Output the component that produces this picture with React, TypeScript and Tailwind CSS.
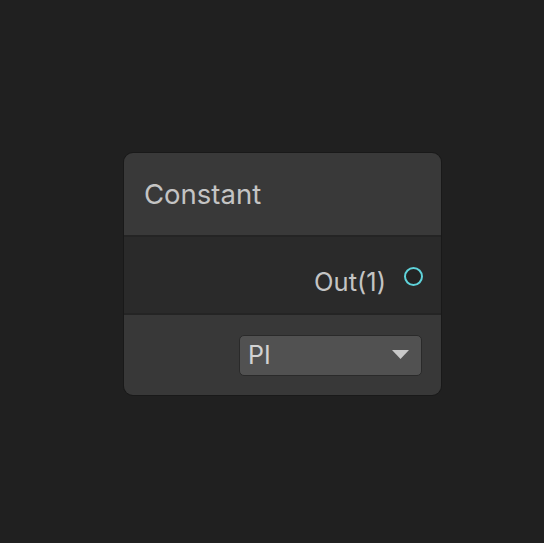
export default function App() {
  return (
    <div
      className="w-[544px] h-[543px] bg-[#202020] pt-[152px] pl-[123px]"
      style={{ fontFamily: "Inter, 'Noto Sans', sans-serif" }}
    >
      <div className="w-[319px] rounded-[10px] border border-[#191919] overflow-hidden">
        <div className="h-[84px] bg-[#393939] flex items-center pl-[20px] border-b-2 border-[#242424]">
          <span className="text-[27.5px] text-[#c4c4c4] leading-none mt-[2px]">Constant</span>
        </div>
        <div className="h-[78px] bg-[#2a2a2a] flex items-center justify-end pr-[18px] border-b-2 border-[#242424]">
          <span className="text-[25.5px] text-[#c4c4c4] leading-none mt-[14px]">Out(1)</span>
          <div className="ml-[18px] w-[19px] h-[19px] rounded-full border-2 border-[#5fd3da] bg-[#232323] mt-[2px]" />
        </div>
        <div className="h-[80px] bg-[#383838] flex items-center justify-end pr-[19px]">
          <div className="w-[183px] h-[41px] rounded-[5px] bg-[#515151] border border-[#2a2a2a] flex items-center pl-[8px] pr-[12px] justify-between">
            <span className="text-[25px] text-[#d2d2d2] leading-none">PI</span>
            <svg width="17" height="10" viewBox="0 0 17 10">
              <polygon points="0,0 17,0 8.5,9" fill="#c8c8c8" />
            </svg>
          </div>
        </div>
      </div>
    </div>
  );
}
